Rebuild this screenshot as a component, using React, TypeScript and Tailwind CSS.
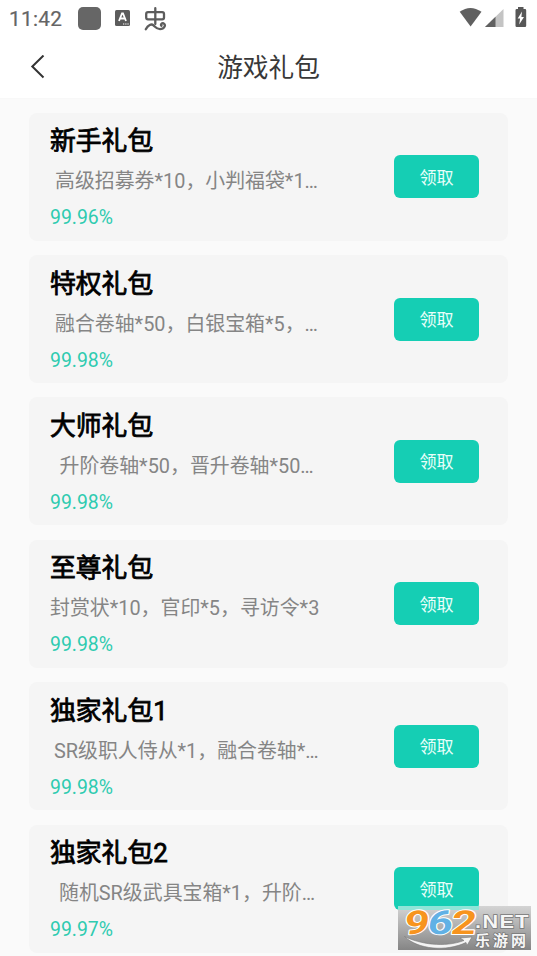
const packs = [
  { title: '新手礼包', desc: '高级招募券*10，小判福袋*1…', indent: 'pl-[5px]', left: '99.96%' },
  { title: '特权礼包', desc: '融合卷轴*50，白银宝箱*5，…', indent: 'pl-[5px]', left: '99.98%' },
  { title: '大师礼包', desc: '升阶卷轴*50，晋升卷轴*50…', indent: 'pl-[9.5px]', left: '99.98%' },
  { title: '至尊礼包', desc: '封赏状*10，官印*5，寻访令*3', indent: 'pl-0', left: '99.98%' },
  { title: '独家礼包1', desc: 'SR级职人侍从*1，融合卷轴*…', indent: 'pl-[4px]', left: '99.98%' },
  { title: '独家礼包2', desc: '随机SR级武具宝箱*1，升阶…', indent: 'pl-[9px]', left: '99.97%' },
];

function StatusBar() {
  return (
    <div className="flex h-9 shrink-0 items-center pl-[9px] pr-[9px] text-[#656565]">
      <span className="mt-[2px] w-[69px] text-[20.8px] leading-none tracking-[0.3px] [-webkit-text-stroke:0.2px_#656565]">11:42</span>
      <span className="h-[23px] w-[23px] rounded-[5px] bg-[#666]" />
      <svg className="ml-[14px] h-4 w-[15px]" viewBox="0 0 15 16">
        <rect width="15" height="16" rx="1.5" fill="#5c5c5c" />
        <path d="M4 11 7 3.5h1L11 11M5.2 8.5h4.6" fill="none" stroke="#fff" strokeWidth="1.8" />
        <path d="M8 14h1.3M10.2 14h1.3M12.4 14h1.3" stroke="#fff" strokeWidth="1.1" />
      </svg>
      <svg className="ml-[14px] mt-[2px] h-6 w-[23px]" viewBox="0 0 23 24" fill="none" stroke="#5c5c5c" strokeWidth="2.3" strokeLinecap="round" strokeLinejoin="round">
        <path d="M11.3 1.2v15.8M4 5.2h14.2q1.8 0 1.8 1.8v3.6q0 1.8-1.8 1.8H4q-1.8 0-1.8-1.8V7q0-1.8 1.8-1.8Z" />
        <path d="M1.8 22.2C4 18 7.5 16.4 9.5 18.4c2.2 2 3.2 3.8 6.5 3.8 4.7 0 6-4.5 3.7-5.8-2-.6-3.6 1.3-2.2 2.3" />
      </svg>
      <div className="flex-1" />
      <svg className="h-6 w-[69px]" viewBox="0 0 69 24">
        <path d="M.7 5.8Q11.3-1.9 22.5 5.8L11.6 20.5Z" fill="#606060" />
        <path d="M44.5 3v18H26Z" fill="#c4c4c4" />
        <path d="M36.5 10.8V21H26Z" fill="#606060" />
        <path d="M59 1h5.5v2H66q1.2 0 1.2 1.2v15.6Q67.2 21 66 21h-8.3q-1.2 0-1.2-1.2V4.2Q56.5 3 57.7 3H59Z" fill="#575757" />
        <path d="M63 5.5 58.7 12.5h2.4l-.9 6 4.8-7.4h-2.6Z" fill="#fff" />
      </svg>
    </div>
  );
}

function Watermark() {
  return (
    <svg className="absolute left-[398px] top-[900px] h-[50px] w-[133px]" viewBox="0 -5 133 50">
      <defs>
        <linearGradient id="plate" x1="0" y1="0" x2="0" y2="1">
          <stop offset="0" stopColor="#d4d4d4" />
          <stop offset="1" stopColor="#858585" />
        </linearGradient>
      </defs>
      <rect y="1" width="133" height="44" fill="url(#plate)" />
      <rect y="1" width="81" height="4" fill="#8fe5d8" />
      <g transform="translate(-1 29) skewX(-8)" fontFamily="Roboto, sans-serif" fontWeight="700" fontSize="33" strokeLinejoin="round" paintOrder="stroke" stroke="#fff" strokeWidth="2">
        <text x="6" y="0" textLength="25" lengthAdjust="spacingAndGlyphs" fill="#f7941e">9</text>
        <text x="29.5" y="0" textLength="25" lengthAdjust="spacingAndGlyphs" fill="#61b1e5">6</text>
        <text x="53" y="0" textLength="25" lengthAdjust="spacingAndGlyphs" fill="#f7941e">2</text>
      </g>
      <path d="M6.5 31.5C22 39 46 43 66 35.5l-4-2.5 12-1-5 8.5-1-3C48 47 20 44.5 6.5 31.5Z" fill="#f4f4f4" stroke="#777" strokeWidth=".6" />
      <g fill="#f6f6f6" stroke="#777" strokeWidth="1.4" paintOrder="stroke">
        <text x="77" y="23" textLength="55" lengthAdjust="spacingAndGlyphs" letterSpacing="1.2" fontFamily="Liberation Sans, sans-serif" fontWeight="700" fontSize="19">.NET</text>
        <text x="77" y="40.5" textLength="51" fontFamily="Liberation Sans, Noto Sans CJK SC, sans-serif" fontWeight="700" fontSize="15">乐游网</text>
      </g>
    </svg>
  );
}

export default function App() {
  return (
    <div className="relative flex h-[956px] w-[537px] flex-col overflow-hidden bg-[#fafafa] font-[Roboto,'Noto_Sans_CJK_SC',sans-serif]">
      <header className="flex h-[99px] shrink-0 flex-col border-b border-[#f8f8f8] bg-white">
        <StatusBar />
        <div className="grid h-[62px] grid-cols-[60px_1fr_60px] items-center">
          <svg className="ml-[30px] h-6 w-4" viewBox="0 0 16 24" fill="none" stroke="#333" strokeWidth="2">
            <path d="M13.5 .5 2.3 11.5 13.5 22.5" />
          </svg>
          <h1 className="pt-[3px] text-center text-[25.7px] leading-none text-[#383838]">游戏礼包</h1>
        </div>
      </header>
      <main className="flex flex-col gap-[14.4px] pl-[29px] pr-[29px] pt-[13.7px]">
        {packs.map((p) => (
          <section key={p.title} className="flex h-32 shrink-0 items-center justify-between rounded-[8px] bg-[#f5f5f5] pl-[21px] pr-[29px]">
            <div className="flex h-full flex-col whitespace-nowrap">
              <h2 className="mt-[9.5px] h-[38px] text-[25.8px] font-normal leading-[38px] text-black [-webkit-text-stroke:0.8px_black]">{p.title}</h2>
              <p className={`mt-[7px] h-[30px] text-[19.9px] leading-[30px] text-[#858585] ${p.indent}`}>{p.desc}</p>
              <p className="mt-[7px] h-[28px] text-[19.4px] leading-[28px] text-[#2fcbb0]">{p.left}</p>
            </div>
            <button className="h-[43px] w-[85px] rounded-[6px] bg-[#15ceb4] pt-[3px] text-[17.1px] leading-none text-[#e8fffa]">领取</button>
          </section>
        ))}
      </main>
      <Watermark />
    </div>
  );
}
